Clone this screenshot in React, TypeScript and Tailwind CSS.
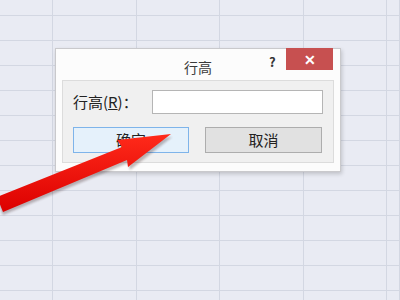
import React from 'react';

const cols = ['w-[53px]', 'w-[84px]', 'w-[83px]', 'w-[84px]', 'w-[83px]', 'flex-1'];
const rows = Array.from({ length: 13 }, (_, i) => (i === 0 ? 'h-[16px]' : 'h-[25px]'));

function Sheet() {
  return (
    <div className="flex flex-col w-full h-full">
      {rows.map((h, r) => (
        <div key={r} className={`flex ${h} shrink-0`}>
          {cols.map((w, c) => (
            <div key={c} className={`${w} border-r border-b border-[#d3d7e2]`} />
          ))}
        </div>
      ))}
    </div>
  );
}

function Arrow() {
  return (
    <svg className="absolute left-0 top-0" width="400" height="300" viewBox="0 0 400 300">
      <defs>
        <linearGradient id="ar" x1="0" y1="0" x2="0" y2="1">
          <stop offset="0" stopColor="#ff2a1a" />
          <stop offset="1" stopColor="#dc0000" />
        </linearGradient>
        <filter id="bl">
          <feGaussianBlur stdDeviation="1.2" />
        </filter>
      </defs>
      <polygon
        points="-3,200 123,150 120,143 172,137 130,170 128,163 3,215"
        fill="#3a2020"
        opacity="0.3"
        filter="url(#bl)"
      />
      <polygon
        points="-3,197 122,147 117,140 171,134 128,167 127,160 3,212"
        fill="url(#ar)"
      />
    </svg>
  );
}

export default function App() {
  return (
    <div
      className="relative w-[400px] h-[300px] overflow-hidden bg-[#e9ebf3]"
      style={{ fontFamily: '"Noto Sans CJK SC", "Noto Sans", sans-serif' }}
    >
      <Sheet />

      <div className="absolute left-[55px] top-[48px] w-[286px] h-[124px] bg-[#fcfcfc] border border-[#c9c9cc] shadow-[1px_2px_4px_rgba(0,0,0,0.18)] flex flex-col">
        <div className="relative h-[31px] flex items-center justify-center">
          <span className="text-[14px] text-[#3a3a3a] mt-[6px]">行高</span>
          <span className="absolute left-[213px] top-[3px] text-[13px] font-bold text-[#333]">?</span>
          <div className="absolute right-[7px] top-[-1px] w-[47px] h-[22px] bg-[#c75050] flex items-center justify-center">
            <span className="text-white text-[14px] font-bold leading-none">✕</span>
          </div>
        </div>

        <div className="mx-[6px] mb-[8px] flex-1 bg-[#f0f0f0] border border-[#dcdcdc] px-[10px] pt-[9px]">
          <div className="flex items-center gap-[6px]">
            <span className="w-[73px] text-[15px] text-[#222] whitespace-nowrap">
              行高(<span className="underline">R</span>)：
            </span>
            <div className="w-[171px] h-[24px] bg-white border border-[#b5b5b5]" />
          </div>
          <div className="flex mt-[13px] gap-[16px]">
            <div className="w-[116px] h-[26px] bg-[#e5f1fb] border border-[#7eb4ea] flex items-center justify-center text-[15px] text-[#222]">
              确定
            </div>
            <div className="w-[117px] h-[26px] bg-[#e1e1e1] border border-[#adadad] flex items-center justify-center text-[15px] text-[#222]">
              取消
            </div>
          </div>
        </div>
      </div>

      <Arrow />
    </div>
  );
}
